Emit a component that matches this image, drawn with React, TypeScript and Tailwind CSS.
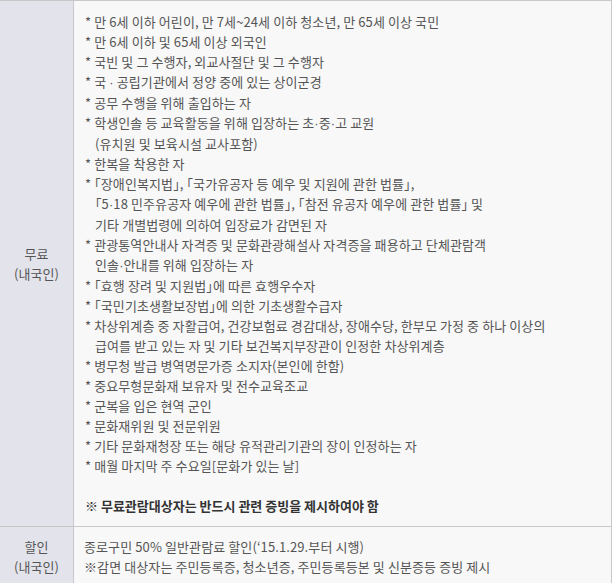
import React from 'react';

const freeItems: string[][] = [
  ['만 6세 이하 어린이, 만 7세~24세 이하 청소년, 만 65세 이상 국민'],
  ['만 6세 이하 및 65세 이상 외국인'],
  ['국빈 및 그 수행자, 외교사절단 및 그 수행자'],
  ['국 · 공립기관에서 정양 중에 있는 상이군경'],
  ['공무 수행을 위해 출입하는 자'],
  ['학생인솔 등 교육활동을 위해 입장하는 초·중·고 교원', '(유치원 및 보육시설 교사포함)'],
  ['한복을 착용한 자'],
  [
    '「장애인복지법」, 「국가유공자 등 예우 및 지원에 관한 법률」,',
    '「5·18 민주유공자 예우에 관한 법률」, 「참전 유공자 예우에 관한 법률」 및',
    '기타 개별법령에 의하여 입장료가 감면된 자',
  ],
  ['관광통역안내사 자격증 및 문화관광해설사 자격증을 패용하고 단체관람객', '인솔·안내를 위해 입장하는 자'],
  ['「효행 장려 및 지원법」에 따른 효행우수자'],
  ['「국민기초생활보장법」에 의한 기초생활수급자'],
  [
    '차상위계층 중 자활급여, 건강보험료 경감대상, 장애수당, 한부모 가정 중 하나 이상의',
    '급여를 받고 있는 자 및 기타 보건복지부장관이 인정한 차상위계층',
  ],
  ['병무청 발급 병역명문가증 소지자(본인에 한함)'],
  ['중요무형문화재 보유자 및 전수교육조교'],
  ['군복을 입은 현역 군인'],
  ['문화재위원 및 전문위원'],
  ['기타 문화재청장 또는 해당 유적관리기관의 장이 인정하는 자'],
  ['매월 마지막 주 수요일[문화가 있는 날]'],
];

// middle dots are full-width in the CJK font, so take them from a Latin one
const dots = (text: string) =>
  text.split('·').map((part, i) => (
    <React.Fragment key={i}>
      {i > 0 && <span className="font-['Liberation_Sans']">·</span>}
      {part}
    </React.Fragment>
  ));

const App: React.FC = () => {
  return (
    <div
      className="w-[613px] h-[583px] overflow-hidden bg-white text-[13px] leading-[20px] text-[#555] tracking-[0.1px] [font-feature-settings:'halt']"
      style={{ fontFamily: '"Noto Sans CJK KR", "Noto Sans", sans-serif' }}
    >
      <div className="w-[612px] border-t border-r border-[#c8c8c8]">
        {/* 무료 row */}
        <div className="flex border-b border-[#c8c8c8]">
          <div className="w-[74px] shrink-0 bg-[#e3e3eb] border-r border-[#c8c8c8] flex flex-col items-center justify-center">
            <span>무료</span>
            <span>(내국인)</span>
          </div>
          <div className="flex-1 bg-[#f8f8f8] pl-[11px] pt-[11px] pb-[10px] whitespace-nowrap">
            {freeItems.map((lines, i) => (
              <div key={i}>
                <div>* {dots(lines[0])}</div>
                {lines.slice(1).map((l, j) => (
                  <div key={j} className="pl-[10px]">
                    {dots(l)}
                  </div>
                ))}
              </div>
            ))}
            <div className="h-[20px]" />
            <div className="font-bold text-[#333] tracking-normal">※ 무료관람대상자는 반드시 관련 증빙을 제시하여야 함</div>
          </div>
        </div>

        {/* 할인 row */}
        <div className="flex border-b border-[#c8c8c8]">
          <div className="w-[74px] shrink-0 bg-[#e3e3eb] border-r border-[#c8c8c8] flex flex-col items-center justify-center">
            <span>할인</span>
            <span>(내국인)</span>
          </div>
          <div className="flex-1 bg-[#f8f8f8] pl-[10px] py-[10px] whitespace-nowrap">
            <div>종로구민 50% 일반관람료 할인(‘15.1.29.부터 시행)</div>
            <div>※감면 대상자는 주민등록증, 청소년증, 주민등록등본 및 신분증등 증빙 제시</div>
          </div>
        </div>
      </div>
    </div>
  );
};

export default App;
